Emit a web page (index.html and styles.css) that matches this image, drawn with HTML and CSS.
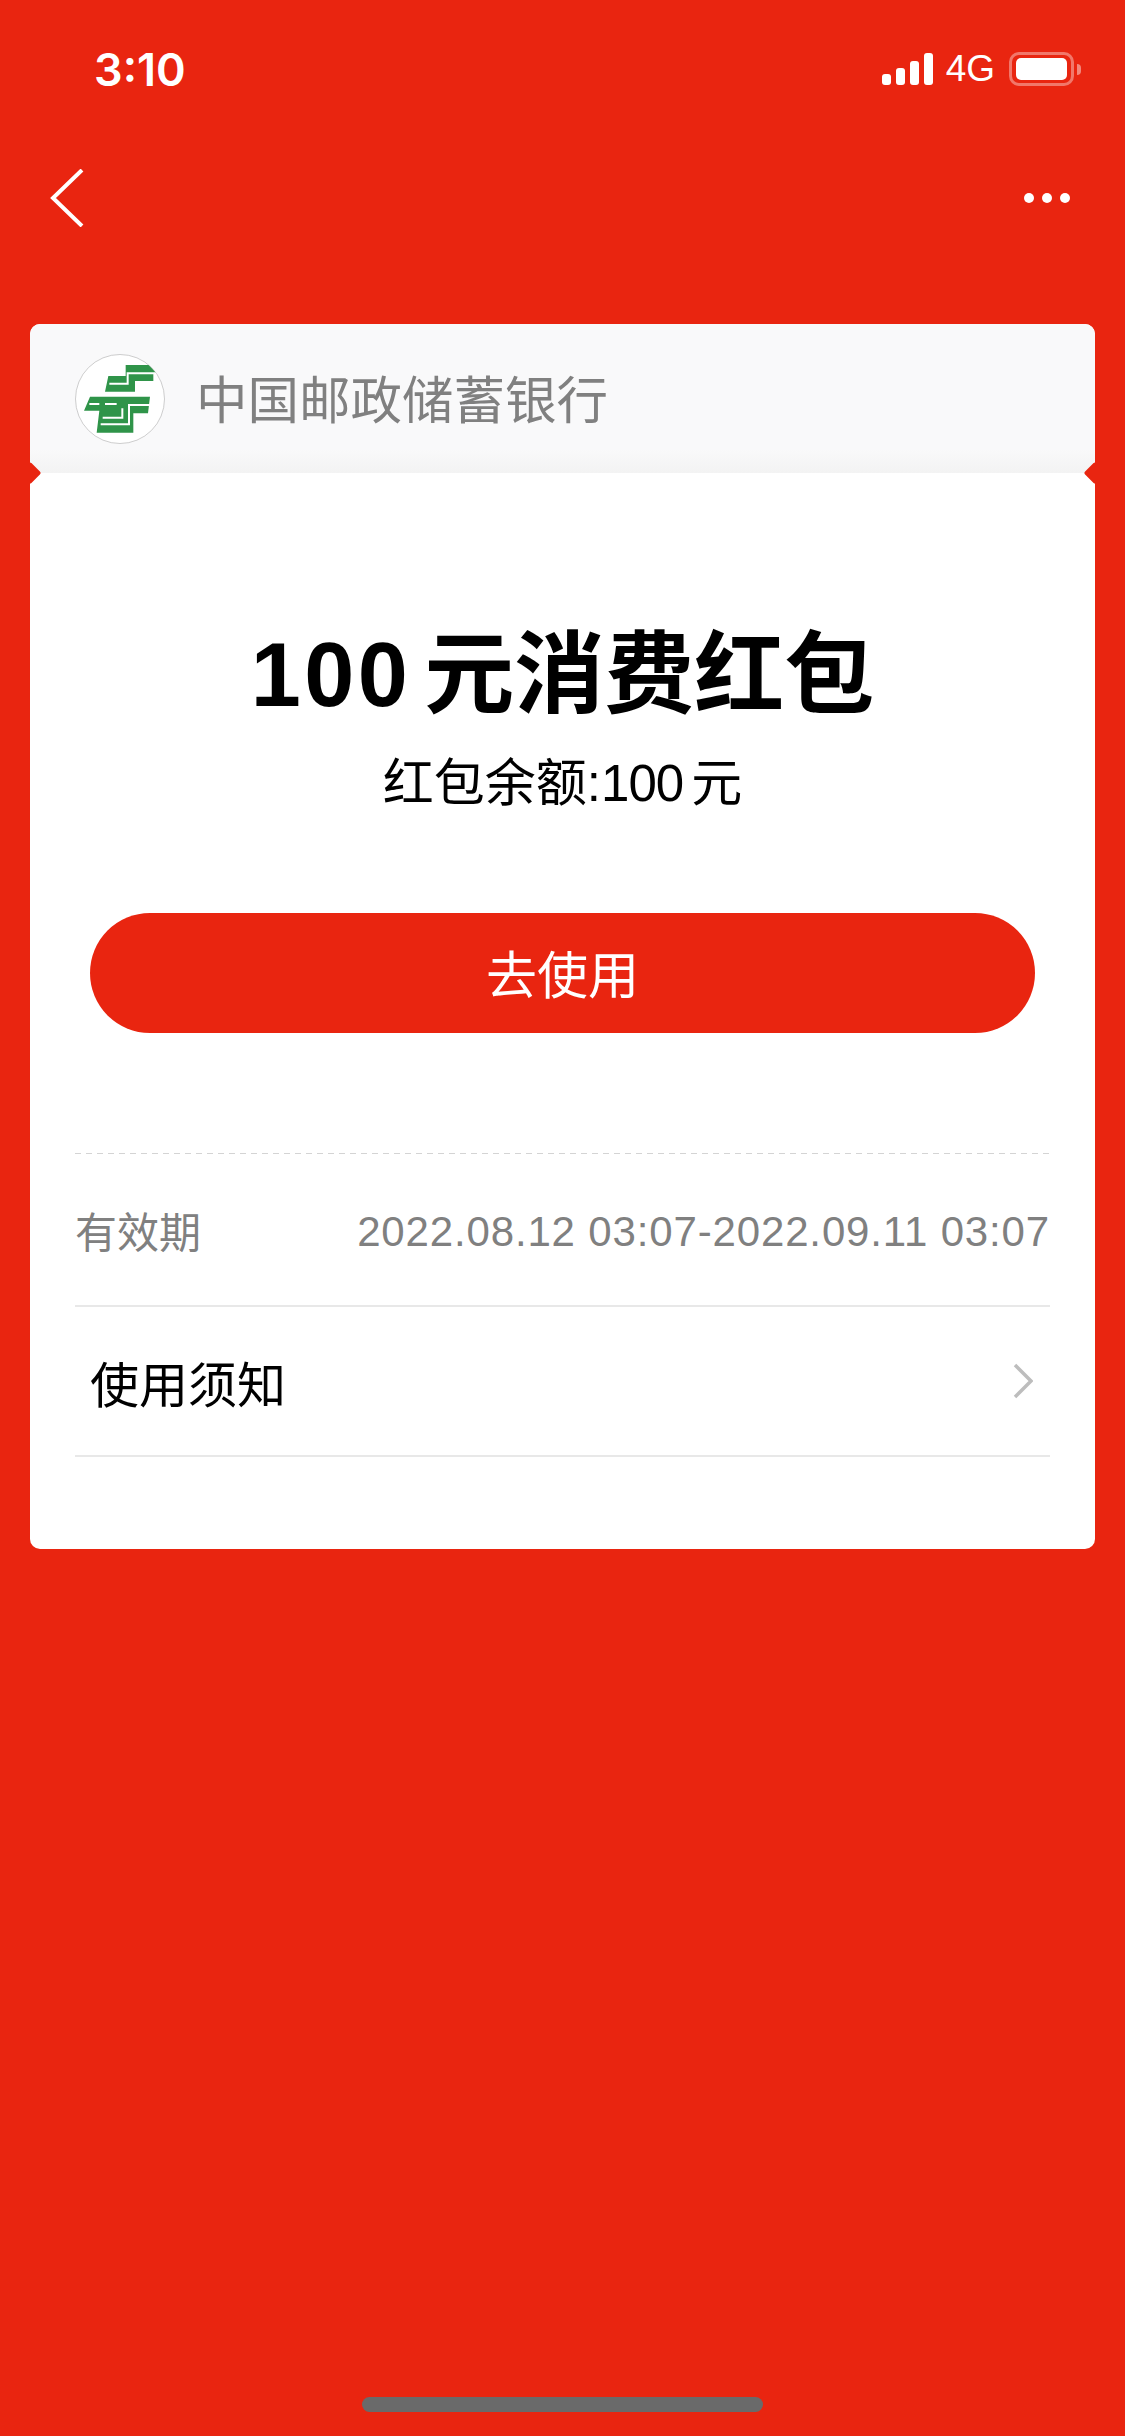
FILE: index.html
```html
<!DOCTYPE html>
<html lang="zh-CN">
<head>
<meta charset="utf-8">
<title>100元消费红包</title>
<link rel="stylesheet" href="styles.css">
</head>
<body>
<div class="page">
  <header class="status">
    <span class="time">3:10</span>
    <div class="status-right">
      <div class="signal"><i class="b1"></i><i class="b2"></i><i class="b3"></i><i class="b4"></i></div>
      <span class="net">4G</span>
      <div class="battery"><div class="battery-level"></div></div>
      <div class="battery-cap"></div>
    </div>
  </header>

  <nav class="nav">
    <svg class="back" width="34" height="58" viewBox="0 0 34 58"><path d="M32 1 3 29l29 28"/></svg>
    <div class="more"><i></i><i></i><i></i></div>
  </nav>

  <main class="card">
    <span class="notch notch-left"></span>
    <span class="notch notch-right"></span>
    <div class="card-head">
      <svg class="logo" width="90" height="90" viewBox="15 12 270 270">
        <defs><clipPath id="logo-round"><circle cx="150" cy="147" r="133"/></clipPath></defs>
        <circle cx="150" cy="147" r="133.500" fill="#fff" stroke="#b5b5b5" stroke-width="2"/>
        <g clip-path="url(#logo-round)">
          <path class="logo-green" d="M167 45H240L262 66 250 70V93H195V125H105L115 78H167Z"/>
          <path class="logo-green" d="M60 140H240L234 190H190V248H80L88 182H42Z"/>
          <path class="logo-gap" d="M260 70H173V101H118"/>
          <path class="logo-gap" d="M245 165H177V223H92"/>
          <path class="logo-gap" d="M98 203H157V175"/>
          <path class="logo-gap" d="M58 162H88M105 162H140"/>
        </g>
      </svg>
      <span class="bank">中国邮政储蓄银行</span>
    </div>
    <div class="card-body">
      <h1 class="title"><span class="title-num">100</span>元消费红包</h1>
      <p class="balance">红包余额:<span class="balance-num">100</span>元</p>
      <button class="use-btn">去使用</button>
      <div class="dashed"></div>
      <div class="row row-date">
        <span class="label">有效期</span>
        <span class="dates">2022.08.12 03:07-2022.09.11 03:07</span>
      </div>
      <div class="row row-link">
        <span class="link-text">使用须知</span>
        <svg class="chev" width="20" height="36" viewBox="0 0 20 36"><path d="M2 2l16 16L2 34"/></svg>
      </div>
    </div>
  </main>

  <div class="home-bar"></div>
</div>
</body>
</html>
```
FILE: styles.css
```css
* { box-sizing: border-box; }

html, body {
  margin: 0;
  padding: 0;
}

body {
  background: #e92510;
  font-family: "Liberation Sans", "Noto Sans CJK SC", sans-serif;
}

.page {
  display: flex;
  flex-direction: column;
  height: 2436px;
  overflow: hidden;
  background: #e92510;
}

/* Status bar */
.status {
  display: flex;
  justify-content: space-between;
  align-items: flex-start;
  height: 140px;
  padding: 43px 44px 0 94px;
  color: #fff;
}

.time {
  font-family: Inter, "Liberation Sans", sans-serif;
  font-size: 45px;
  font-weight: 600;
  line-height: 54px;
}

.status-right {
  display: flex;
  align-items: center;
  height: 54px;
  margin-top: -1px;
}

.signal {
  display: flex;
  align-items: flex-end;
  gap: 5px;
  height: 32px;
  margin-right: 13px;
}

.signal i {
  display: block;
  width: 9px;
  background: #fff;
  border-radius: 3px;
}

.b1 { height: 11px; }
.b2 { height: 17px; }
.b3 { height: 24px; }
.b4 { height: 32px; }

.net {
  font-size: 37px;
  line-height: 54px;
  margin-right: 14px;
}

.battery {
  width: 65px;
  height: 34px;
  padding: 3px 4px;
  border: 3px solid rgba(255, 255, 255, 0.38);
  border-radius: 10px;
}

.battery-level {
  width: 100%;
  height: 100%;
  background: #fff;
  border-radius: 5px;
}

.battery-cap {
  width: 4px;
  height: 11px;
  margin-left: 3px;
  background: rgba(255, 255, 255, 0.45);
  border-radius: 0 4px 4px 0;
}

/* Navigation */
.nav {
  display: flex;
  justify-content: space-between;
  align-items: center;
  height: 116px;
  padding: 0 55px 0 50px;
}

.back {
  fill: none;
  stroke: #fff;
  stroke-width: 4;
}

.more {
  display: flex;
  gap: 8px;
}

.more i {
  display: block;
  width: 10px;
  height: 10px;
  background: #fff;
  border-radius: 50%;
}

/* Coupon card */
.card {
  position: relative;
  margin: 68px 30px 0;
  background: #fff;
  border-radius: 10px;
  overflow: hidden;
}

.notch {
  position: absolute;
  top: 141px;
  width: 16px;
  height: 16px;
  background: #e92510;
  border-radius: 2px;
  transform: rotate(45deg);
}

.notch-left { left: -8px; }
.notch-right { right: -8px; }

.card-head {
  display: flex;
  align-items: center;
  gap: 31px;
  height: 149px;
  padding-left: 45px;
  background: linear-gradient(#f9f9fa 0, #f9f9fa 84%, #f3f3f3 100%);
}

.logo { flex: none; }

.logo-green { fill: #2f9449; }

.logo-gap {
  fill: none;
  stroke: #fff;
  stroke-width: 6;
}

.bank {
  padding-top: 5px;
  font-size: 51.500px;
  line-height: 60px;
  color: #808080;
}

.card-body {
  padding: 0 45px 92px;
}

.title {
  margin: 152px 0 0;
  font-size: 90px;
  line-height: 100px;
  font-weight: 700;
  text-align: center;
  color: #000;
}

.title-num {
  margin-right: 13px;
  letter-spacing: 3.500px;
}

.balance {
  margin: 29px 0 0;
  font-size: 51px;
  line-height: 60px;
  text-align: center;
  color: #000;
}

.balance-num {
  margin-right: 8px;
  letter-spacing: -1px;
}

.use-btn {
  display: block;
  width: 945px;
  height: 120px;
  margin: 99px 0 0 15px;
  padding: 0 0 3px;
  border: 0;
  border-radius: 60px;
  background: #e92510;
  color: #fff;
  font-family: inherit;
  font-size: 51px;
}

.dashed {
  height: 1px;
  margin-top: 120px;
  background: repeating-linear-gradient(90deg, #d4d4d4 0 6px, transparent 6px 11px);
}

.row {
  display: flex;
  align-items: center;
  justify-content: space-between;
  border-bottom: 2px solid #e8e8e8;
}

.row-date { height: 153px; }

.row-link {
  height: 150px;
  padding: 0 17px 0 15px;
}

.label {
  font-size: 42px;
  color: #808080;
}

.dates {
  padding-top: 5px;
  font-size: 42px;
  letter-spacing: 0.85px;
  color: #808080;
}

.link-text {
  font-size: 49px;
  color: #000;
}

.chev {
  fill: none;
  stroke: #bdbdbd;
  stroke-width: 3.5;
}

/* Home indicator */
.home-bar {
  align-self: center;
  width: 401px;
  height: 15px;
  margin-top: auto;
  margin-bottom: 24px;
  background: #6a6a6a;
  border-radius: 8px;
}
```
